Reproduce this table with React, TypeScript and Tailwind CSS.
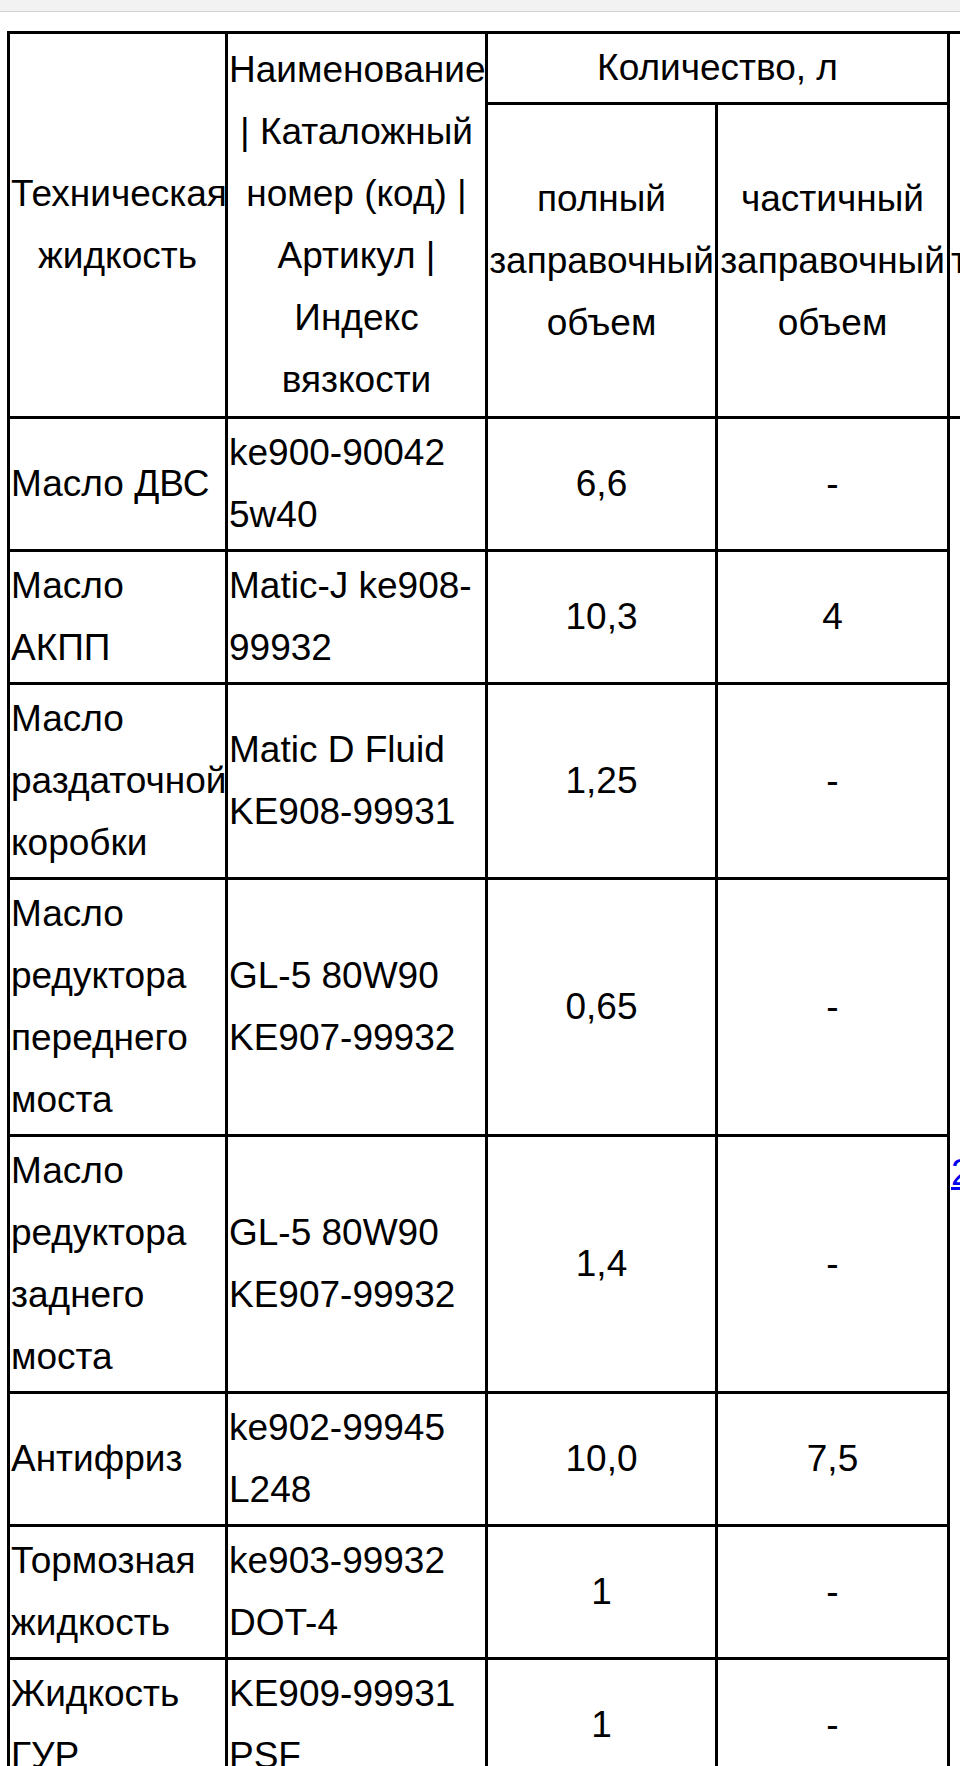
import React from "react";

type Row = {
  fluid: string[];
  code: string[];
  full: string;
  part: string;
};

const rows: Row[] = [
  { fluid: ["Масло ДВС"], code: ["ke900-90042", "5w40"], full: "6,6", part: "-" },
  { fluid: ["Масло", "АКПП"], code: ["Matic-J ke908-", "99932"], full: "10,3", part: "4" },
  {
    fluid: ["Масло", "раздаточной", "коробки"],
    code: ["Matic D Fluid", "KE908-99931"],
    full: "1,25",
    part: "-",
  },
  {
    fluid: ["Масло", "редуктора", "переднего", "моста"],
    code: ["GL-5 80W90", "KE907-99932"],
    full: "0,65",
    part: "-",
  },
  {
    fluid: ["Масло", "редуктора", "заднего", "моста"],
    code: ["GL-5 80W90", "KE907-99932"],
    full: "1,4",
    part: "-",
  },
  { fluid: ["Антифриз"], code: ["ke902-99945", "L248"], full: "10,0", part: "7,5" },
  {
    fluid: ["Тормозная", "жидкость"],
    code: ["ke903-99932", "DOT-4"],
    full: "1",
    part: "-",
  },
  { fluid: ["Жидкость", "ГУР"], code: ["KE909-99931", "PSF"], full: "1", part: "-" },
];

const Lines = ({ items }: { items: string[] }) => (
  <>
    {items.map((t, i) => (
      <React.Fragment key={i}>
        {i > 0 && <br />}
        {t}
      </React.Fragment>
    ))}
  </>
);

const cell =
  "border-[3px] border-black px-[1px] pt-[3px] pb-[3px] align-middle whitespace-nowrap overflow-hidden";

export default function App() {
  return (
    <div className="w-[960px] h-[1766px] overflow-hidden bg-white font-['Liberation_Sans',Arial,sans-serif] text-black">
      <div className="h-[12px] bg-[#f2f2f2] border-b border-[#d3d3d3]" />
      <table className="ml-[7px] mt-[19px] table-fixed border-collapse text-[37px] leading-[62px] w-[1140px]">
        <colgroup>
          <col className="w-[218px]" />
          <col className="w-[260px]" />
          <col className="w-[230px]" />
          <col className="w-[232px]" />
          <col className="w-[200px]" />
        </colgroup>
        <thead>
          <tr>
            <th rowSpan={2} className={`${cell} font-normal text-center`}>
              <Lines items={["Техническая", "жидкость"]} />
            </th>
            <th rowSpan={2} className={`${cell} font-normal text-center`}>
              <Lines
                items={[
                  "Наименование",
                  "| Каталожный",
                  "номер (код) |",
                  "Артикул |",
                  "Индекс",
                  "вязкости",
                ]}
              />
            </th>
            <th colSpan={2} className={`${cell} font-normal text-center`}>
              Количество, л
            </th>
            <th rowSpan={2} className={`${cell} font-normal text-left pt-[75px]`}>
              тыс. км
            </th>
          </tr>
          <tr>
            <th className={`${cell} h-[314px] font-normal text-center`}>
              <Lines items={["полный", "заправочный", "объем"]} />
            </th>
            <th className={`${cell} h-[314px] font-normal text-center`}>
              <Lines items={["частичный", "заправочный", "объем"]} />
            </th>
          </tr>
        </thead>
        <tbody>
          {rows.map((r, i) => (
            <tr key={i}>
              <td className={`${cell} text-left`}>
                <Lines items={r.fluid} />
              </td>
              <td className={`${cell} text-left`}>
                <Lines items={r.code} />
              </td>
              <td className={`${cell} text-center`}>{r.full}</td>
              <td className={`${cell} text-center`}>{r.part}</td>
              {i === 0 && (
                <td rowSpan={rows.length} className={`${cell} text-left pt-[140px]`}>
                  <a href="#" className="text-[#0000ee] underline">
                    2 года
                  </a>
                </td>
              )}
            </tr>
          ))}
        </tbody>
      </table>
    </div>
  );
}
